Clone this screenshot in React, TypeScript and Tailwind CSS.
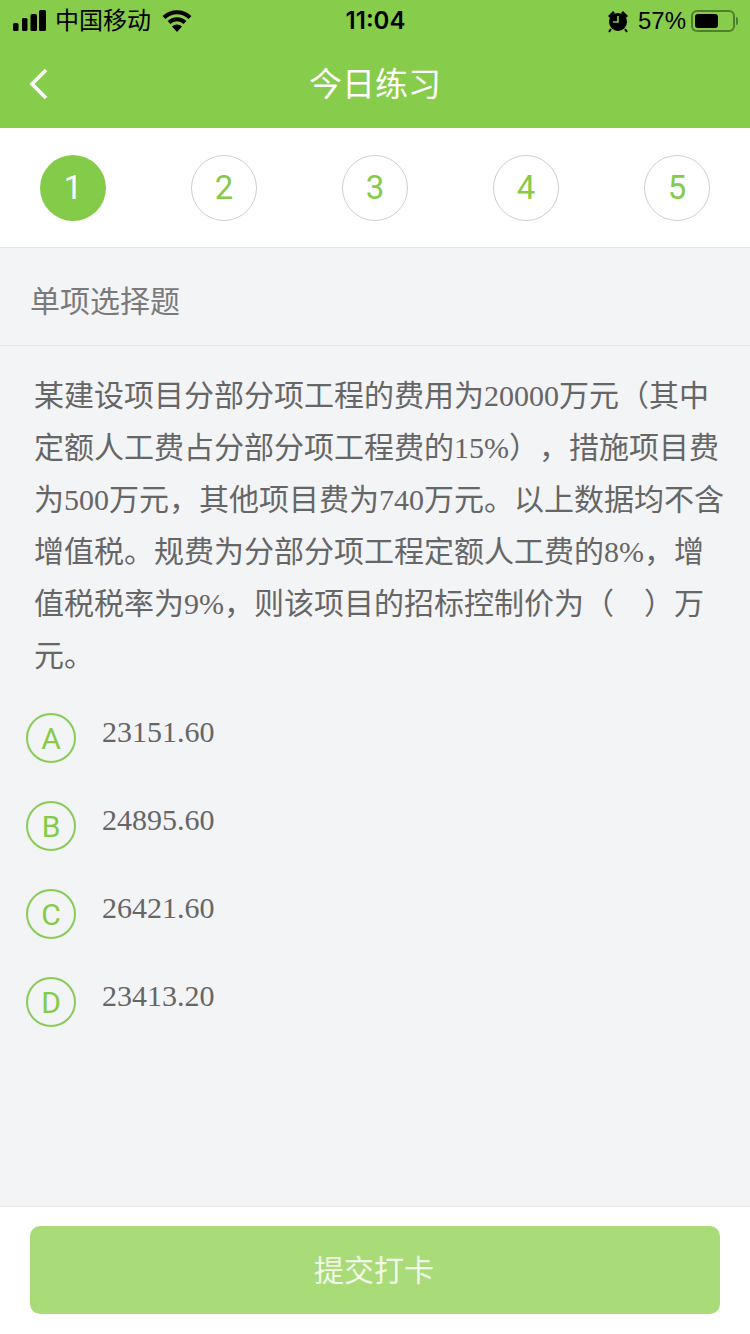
import React from "react";

const serif = "font-['Liberation_Serif','Noto_Sans_CJK_SC',serif] [text-spacing-trim:space-all]";

function StatusBar() {
  return (
    <div className="flex h-[40px] items-center justify-between pl-[13px] pr-[12px] pt-[1px] text-black">
      <div className="flex w-[250px] items-center">
        <svg width="35" height="22" viewBox="0 0 35 22" className="fill-black">
          <rect x="0" y="13" width="5.5" height="8" rx="1.5" />
          <rect x="9" y="8" width="5.5" height="13" rx="1.5" />
          <rect x="17.5" y="4" width="6.5" height="17" rx="1.5" />
          <rect x="26" y="0" width="7" height="21" rx="1.5" />
        </svg>
        <span className="ml-[7px] text-[24px] leading-[30px]">中国移动</span>
        <svg width="30" height="23" viewBox="0 0 30 23" className="ml-[11px]">
          <path d="M2 8.5a18.5 18.5 0 0 1 26 0" fill="none" stroke="#000" strokeWidth="4" />
          <path d="M7 13.5a11.5 11.5 0 0 1 16 0" fill="none" stroke="#000" strokeWidth="4" />
          <path d="M10 17.5a7 7 0 0 1 10 0L15 23z" fill="#000" />
        </svg>
      </div>
      <span className="font-['Inter',sans-serif] text-[24px] leading-[30px] font-semibold">11:04</span>
      <div className="flex w-[250px] items-center justify-end">
        <svg width="22" height="24" viewBox="0 0 22 24">
          <path d="M1 7l5-5 2 2-5 5zM21 7l-5-5-2 2 5 5z" fill="#000" />
          <circle cx="11" cy="13" r="9" fill="#000" />
          <path d="M11 7v6h-5" stroke="#87CC4B" strokeWidth="1.6" fill="none" />
          <path d="M4 20l-2 3M18 20l2 3" stroke="#000" strokeWidth="2" />
        </svg>
        <span className="ml-[9px] text-[24px] leading-[30px]">57%</span>
        <div className="ml-[5px] flex h-[22px] w-[44px] items-center rounded-[6px] border-2 border-[#4f7f2c] p-[2px]">
          <div className="h-full w-[23px] rounded-[3px] bg-black" />
        </div>
        <div className="ml-[1px] h-[8px] w-[2px] rounded-r-sm bg-[#4f7f2c]" />
      </div>
    </div>
  );
}

function Step({ n, active }: { n: number; active?: boolean }) {
  return (
    <div
      className={
        active
          ? "flex h-[66px] w-[66px] items-center justify-center rounded-full bg-[#85CB4A] font-['Roboto',sans-serif] text-[33px] text-white"
          : "flex h-[66px] w-[66px] items-center justify-center rounded-full border border-[#cfcfcf] font-['Roboto',sans-serif] text-[33px] text-[#85CB4A]"
      }
    >
      {n}
    </div>
  );
}

function Option({ letter, value }: { letter: string; value: string }) {
  return (
    <div className="flex h-[88px] items-start">
      <div className="flex h-[50px] w-[50px] items-center justify-center rounded-full border-2 border-[#88cc55] font-['Roboto',sans-serif] text-[30px] text-[#85CB4A]">
        {letter}
      </div>
      <span className={`ml-[26px] text-[30px] leading-[38px] text-[#666666] ${serif}`}>{value}</span>
    </div>
  );
}

export default function App() {
  return (
    <div className="flex h-[1334px] w-[750px] flex-col bg-[#F3F4F6] font-['Liberation_Sans','Noto_Sans_CJK_SC',sans-serif]">
      <div className="h-[128px] bg-[#87CC4B]">
        <StatusBar />
        <div className="relative flex h-[88px] items-center justify-center">
          <svg width="20" height="32" viewBox="0 0 20 32" className="absolute left-[29px] top-[28px]">
            <path d="M17 2L3 16l14 14" fill="none" stroke="#fff" strokeWidth="3.6" />
          </svg>
          <span className="pt-[2px] text-[33px] leading-[44px] text-white">今日练习</span>
        </div>
      </div>

      <div className="flex h-[120px] items-center justify-between border-b border-[#e6e6e6] bg-white pl-[40px] pr-[40px]">
        <Step n={1} active />
        <Step n={2} />
        <Step n={3} />
        <Step n={4} />
        <Step n={5} />
      </div>

      <div className="flex h-[98px] items-center border-b border-[#e6e7e9] pl-[30px] pt-[10px] text-[30px] text-[#7a7a7a]">
        单项选择题
      </div>

      <div className={`mt-[24px] pl-[34px] pr-[20px] text-[30px] leading-[52px] text-[#666666] ${serif}`}>
        <div>某建设项目分部分项工程的费用为20000万元（其中</div>
        <div>定额人工费占分部分项工程费的15%），措施项目费</div>
        <div>为500万元，其他项目费为740万元。以上数据均不含</div>
        <div>增值税。规费为分部分项工程定额人工费的8%，增</div>
        <div>值税税率为9%，则该项目的招标控制价为（&nbsp;&nbsp;&nbsp;&nbsp;）万</div>
        <div>元。</div>
      </div>

      <div className="mt-[31px] flex-1 pl-[26px]">
        <Option letter="A" value="23151.60" />
        <Option letter="B" value="24895.60" />
        <Option letter="C" value="26421.60" />
        <Option letter="D" value="23413.20" />
      </div>

      <div className="h-[128px] border-t border-[#e8e8e8] bg-white px-[30px] pt-[19px]">
        <div className="flex h-[88px] items-center justify-center rounded-[10px] bg-[#A9DB78] pr-[2px] text-[30px] text-[#f1f9e8]">
          提交打卡
        </div>
      </div>
    </div>
  );
}
